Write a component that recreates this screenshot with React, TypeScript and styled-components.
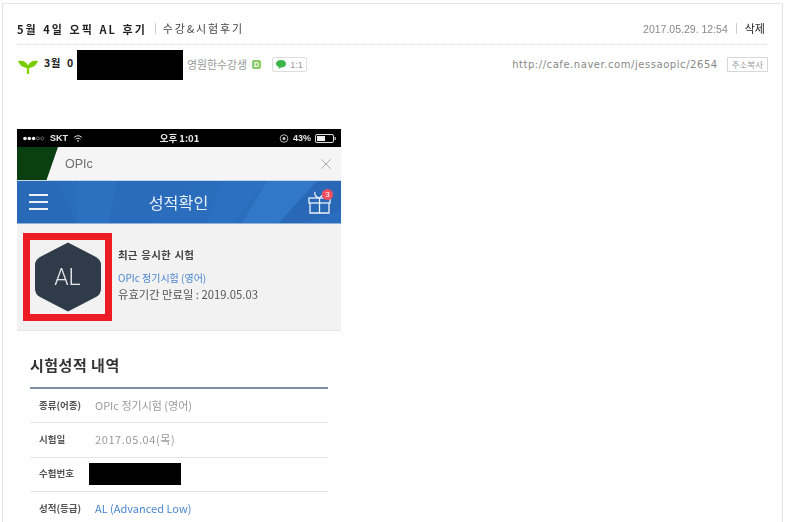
import React from "react";
import styled, { createGlobalStyle } from "styled-components";
import { X } from "lucide-react";

const KR = `"Noto Sans CJK KR", "Liberation Sans", sans-serif`;

const Global = createGlobalStyle`
  html, body { margin: 0; padding: 0; background: #fff; height: 522px; overflow: hidden; }
  body { font-family: ${KR}; }
`;

const Frame = styled.div`
  box-sizing: border-box;
  width: 781px;
  height: 530px;
  margin: 3px 0 0 2px;
  padding: 0 14px 0 14px;
  border: 1px solid #e6e6e6;
  border-bottom: 0;
  overflow: hidden;
`;

const TitleRow = styled.div`
  height: 41px;
  display: flex;
  align-items: center;
  padding-top: 9px;
  box-sizing: border-box;
  border-bottom: 1px dotted #dcdcdc;
  filter: blur(0.3px);
`;

const Subject = styled.strong`
  font-size: 11px;
  font-weight: 700;
  color: #222;
  letter-spacing: 2.05px;
  word-spacing: 1px;
`;

const Category = styled.span`
  font-size: 11px;
  color: #444;
  margin-left: 8px;
  padding-left: 7px;
  letter-spacing: 1.85px;
  border-left: 1px solid #ccc;
  line-height: 11px;
`;

const Meta = styled.div`
  margin-left: auto;
  display: flex;
  align-items: center;
  font-family: "Liberation Sans", sans-serif;
  font-size: 10.5px;
  color: #888;
`;

const Delete = styled.span`
  font-family: ${KR};
  font-size: 11px;
  color: #222;
  margin-left: 8px;
  padding-left: 8px;
  margin-right: 3px;
  border-left: 1px solid #ccc;
  line-height: 11px;
`;

const AuthorRow = styled.div`
  height: 84px;
  display: flex;
  align-items: flex-start;
`;

const Sprout = styled.svg`
  width: 20px;
  height: 20px;
  margin: 11px 6px 0 1px;
  flex: none;
`;

const Nick = styled.strong`
  font-size: 10.5px;
  color: #222;
  margin-top: 10px;
  line-height: 16px;
  letter-spacing: 0.6px;
  word-spacing: 3px;
  width: 33px;
  flex: none;
  white-space: pre;
`;

const Redact = styled.div<{ $w: number; $h: number }>`
  width: ${(p) => p.$w}px;
  height: ${(p) => p.$h}px;
  background: #000;
  flex: none;
`;

const NickRedact = styled(Redact)`
  margin-top: 5px;
`;

const NumberRedact = styled(Redact)`
  margin: 1px 0 0 -6px;
`;

const Rank = styled.span`
  font-size: 10.9px;
  color: #999;
  margin: 11px 0 0 4px;
  line-height: 16px;
`;

const RankBadge = styled.span`
  width: 9px;
  height: 9px;
  margin: 15px 0 0 5px;
  border-radius: 2px;
  background: #8bc964;
  color: #fff;
  font-size: 7px;
  line-height: 9px;
  text-align: center;
  font-family: "Liberation Sans", sans-serif;
  font-weight: 700;
`;

const ChatButton = styled.span`
  display: flex;
  align-items: center;
  gap: 4px;
  box-sizing: border-box;
  height: 15px;
  margin: 12px 0 0 11px;
  padding: 0 3px 0 3px;
  border: 1px solid #dedede;
  border-radius: 2px;
  font-family: "Liberation Sans", sans-serif;
  font-size: 9px;
  color: #999;
`;

const Bubble = styled.svg`
  width: 10px;
  height: 9px;
`;

const UrlBox = styled.div`
  margin: 11px 0 0 auto;
  display: flex;
  align-items: center;
  height: 16px;
`;

const Url = styled.span`
  font-family: "DejaVu Sans", sans-serif;
  font-size: 10px;
  color: #888;
  letter-spacing: 0.55px;
  font-weight: 400;
`;

const CopyButton = styled.span`
  box-sizing: border-box;
  height: 15px;
  margin: 0 0 0 9px;
  padding: 0 4px;
  border: 1px solid #d8d8d8;
  font-size: 8.5px;
  line-height: 13px;
  color: #999;
`;

const Shot = styled.div`
  width: 324px;
  filter: blur(0.45px);
`;

const StatusBar = styled.div`
  height: 18px;
  background: #000;
  color: #e8e8e8;
  font-family: "Liberation Sans", sans-serif;
  font-size: 9px;
  font-weight: 700;
  display: grid;
  grid-template-columns: 1fr auto 1fr;
  align-items: center;
  padding: 0 5px 0 6px;
`;

const StatusLeft = styled.div`
  display: flex;
  align-items: center;
  gap: 5px;
`;

const StatusRight = styled(StatusLeft)`
  justify-content: flex-end;
  gap: 4px;
`;

const Clock = styled.span`
  font-family: ${KR};
  font-size: 9.5px;
`;

const StatusIcon = styled.svg<{ $w: number }>`
  width: ${(p) => p.$w}px;
  height: 9px;
`;

const BrowserBar = styled.div`
  height: 34px;
  background: #f5f5f5;
  border-bottom: 1px solid #c9d6e6;
  box-sizing: border-box;
  display: flex;
  align-items: center;
  font-family: "Liberation Sans", sans-serif;
  font-size: 12.5px;
  color: #6d6d6d;
  padding-right: 6px;
`;

const Wedge = styled.div`
  width: 41px;
  height: 100%;
  background: #0a3f12;
  clip-path: polygon(0 0, 100% 0, 72% 100%, 0 100%);
  margin-right: 7px;
  flex: none;
`;

const CloseIcon = styled(X)`
  margin-left: auto;
  color: #a9a9a9;
`;

const AppBar = styled.div`
  position: relative;
  height: 43px;
  background: #2a6dbd;
  display: flex;
  align-items: center;
  justify-content: space-between;
  padding: 0 8px 0 12px;
  color: #e6eef8;
  border-bottom: 1px solid #8fb0d8;
  box-sizing: border-box;
`;

const Facets = styled.svg`
  position: absolute;
  inset: 0;
  width: 100%;
  height: 100%;
`;

const Burger = styled.div`
  position: relative;
  display: flex;
  flex-direction: column;
  gap: 5px;
  width: 19px;
`;

const BurgerLine = styled.span`
  display: block;
  height: 2px;
  background: #eaf1fa;
`;

const AppTitle = styled.span`
  position: relative;
  font-size: 16.2px;
  margin-left: 3px;
`;

const Gift = styled.div`
  position: relative;
  width: 27px;
  height: 28px;
`;

const Badge = styled.span`
  position: absolute;
  top: 1px;
  right: 0;
  width: 11px;
  height: 11px;
  border-radius: 50%;
  background: #ef4f5f;
  color: #fff;
  font-family: "Liberation Sans", sans-serif;
  font-size: 8px;
  line-height: 11px;
  text-align: center;
`;

const Profile = styled.div`
  height: 107px;
  background: #f2f2f2;
  border-bottom: 1px solid #e6e6e6;
  box-sizing: border-box;
  display: flex;
  align-items: flex-start;
  padding: 9px 0 0 6px;
`;

const Highlight = styled.div`
  box-sizing: border-box;
  width: 89px;
  height: 88px;
  border: 7.5px solid #ed1c24;
  display: flex;
  align-items: center;
  justify-content: center;
  flex: none;
`;

const Hexagon = styled.div`
  position: relative;
  width: 68px;
  height: 72px;
  display: flex;
  align-items: center;
  justify-content: center;
`;

const HexShape = styled.svg`
  position: absolute;
  inset: 0;
  width: 100%;
  height: 100%;
`;

const Grade = styled.span`
  position: relative;
  font-family: Roboto, "Liberation Sans", sans-serif;
  font-weight: 300;
  font-size: 23px;
  color: #e4e6e8;
`;

const ProfileText = styled.div`
  display: flex;
  flex-direction: column;
  margin: 14px 0 0 6px;
`;

const ProfileTitle = styled.strong`
  font-size: 10.5px;
  line-height: 16px;
  color: #444;
  word-spacing: 1px;
  letter-spacing: 0.2px;
  margin-bottom: 7px;
`;

const ExamLink = styled.span`
  font-size: 10px;
  line-height: 15px;
  color: #4a86cf;
`;

const Valid = styled.span`
  font-size: 11.3px;
  line-height: 18px;
  color: #555;
`;

const Results = styled.div`
  background: #fff;
  padding: 20px 13px 0;
`;

const ResultsTitle = styled.h2`
  margin: 0;
  font-size: 15px;
  font-weight: 700;
  line-height: 28px;
  color: #333;
  height: 36px;
  letter-spacing: 0.5px;
`;

const Table = styled.div`
  border-top: 2px solid #7f8da0;
`;

const Row = styled.div`
  height: 34.3px;
  box-sizing: border-box;
  padding-bottom: 2px;
  display: flex;
  align-items: center;
  border-bottom: 1px solid #e4e4e4;
`;

const RowLabel = styled.span`
  width: 65px;
  box-sizing: border-box;
  padding-left: 9px;
  flex: none;
  font-size: 9.5px;
  font-weight: 700;
  color: #555;
`;

const RowValue = styled.span<{ $link?: boolean; $spaced?: boolean }>`
  font-size: 11px;
  letter-spacing: ${(p) => (p.$spaced ? "0.6px" : "0")};
  color: ${(p) => (p.$link ? "#4a86cf" : "#999")};
`;

const facets = [
  { points: "0,0 38,0 60,43 0,43", fill: "#296ab8" },
  { points: "60,0 100,0 92,43 60,43", fill: "#2c70c0" },
  { points: "100,0 180,0 130,43 92,43", fill: "#2a6cbb" },
  { points: "205,0 250,0 215,43 190,43", fill: "#2c71c1" },
  { points: "250,0 300,0 262,43 225,43", fill: "#3178c8" },
  { points: "300,0 324,0 324,30 285,43 262,43", fill: "#2868b6" },
];

export default function App() {
  return (
    <>
      <Global />
      <Frame>
        <TitleRow>
          <Subject>5월 4일 오픽 AL 후기</Subject>
          <Category>수강&시험후기</Category>
          <Meta>
            2017.05.29. 12:54
            <Delete>삭제</Delete>
          </Meta>
        </TitleRow>
        <AuthorRow>
          <Sprout viewBox="0 0 20 20">
            <path d="M10 18V10" stroke="#86d400" strokeWidth="2.4" />
            <path d="M10 12C6 12 2 10 0 5C5 4 9 6 10 10C11 6 15 4 20 5C18 10 14 12 10 12Z" fill="#78cc00" />
          </Sprout>
          <Nick>3월 0</Nick>
          <NickRedact $w={106} $h={30} />
          <Rank>영원한수강생</Rank>
          <RankBadge>D</RankBadge>
          <ChatButton>
            <Bubble viewBox="0 0 10 9">
              <path d="M5 0C8 0 10 1.5 10 3.7C10 6 8 7.4 5 7.4L2.5 9L3 7C1 6.5 0 5.300 0 3.700C0 1.500 2 0 5 0Z" fill="#3cb54a" />
            </Bubble>
            1:1
          </ChatButton>
          <UrlBox>
            <Url>http://cafe.naver.com/jessaopic/2654</Url>
            <CopyButton>주소복사</CopyButton>
          </UrlBox>
        </AuthorRow>
        <Shot>
          <StatusBar>
            <StatusLeft>
              <StatusIcon $w={22} viewBox="0 0 22 9">
                <circle cx="2" cy="4.500" r="1.800" fill="#eee" />
                <circle cx="6.300" cy="4.500" r="1.800" fill="#eee" />
                <circle cx="10.600" cy="4.500" r="1.800" fill="#eee" />
                <circle cx="15" cy="4.500" r="1.500" fill="none" stroke="#aaa" strokeWidth="0.600" />
                <circle cx="19.300" cy="4.500" r="1.500" fill="none" stroke="#aaa" strokeWidth="0.600" />
              </StatusIcon>
              <span>SKT</span>
              <StatusIcon $w={10} viewBox="0 0 10 9">
                <path d="M1 3.500C3.500 1.200 6.500 1.200 9 3.500M2.500 5.200C4 3.900 6 3.900 7.500 5.200" stroke="#ddd" strokeWidth="1" fill="none" />
                <path d="M5 8L3.800 6.500C4.500 6 5.500 6 6.200 6.500Z" fill="#ddd" />
              </StatusIcon>
            </StatusLeft>
            <Clock>오후 1:01</Clock>
            <StatusRight>
              <StatusIcon $w={10} viewBox="0 0 10 9">
                <circle cx="5" cy="4.500" r="3.800" fill="none" stroke="#ccc" strokeWidth="0.900" />
                <circle cx="5" cy="4.500" r="1.500" fill="#ccc" />
              </StatusIcon>
              <span>43%</span>
              <StatusIcon $w={21} viewBox="0 0 21 9">
                <rect x="0.500" y="0.500" width="18" height="8" rx="1.500" fill="none" stroke="#ddd" />
                <rect x="2" y="2" width="8" height="5" fill="#eee" />
                <rect x="19.500" y="3" width="1.200" height="3" fill="#ddd" />
              </StatusIcon>
            </StatusRight>
          </StatusBar>
          <BrowserBar>
            <Wedge />
            OPIc
            <CloseIcon size={18} strokeWidth={1.3} />
          </BrowserBar>
          <AppBar>
            <Facets viewBox="0 0 324 43" preserveAspectRatio="none">
              {facets.map((f) => (
                <polygon key={f.points} points={f.points} fill={f.fill} />
              ))}
            </Facets>
            <Burger>
              <BurgerLine />
              <BurgerLine />
              <BurgerLine />
            </Burger>
            <AppTitle>성적확인</AppTitle>
            <Gift>
              <svg width="27" height="28" viewBox="0 0 27 28" fill="none" stroke="#eaf1fa" strokeWidth="1.300">
                <rect x="3" y="10" width="21" height="5" />
                <path d="M4 15V25H23V15M13.500 10V25M13.500 10C10 9 8 7 9 4M13.500 10C16 8 18 6 17 4" />
              </svg>
              <Badge>3</Badge>
            </Gift>
          </AppBar>
          <Profile>
            <Highlight>
              <Hexagon>
                <HexShape viewBox="0 0 68 72">
                  <path
                    d="M34 1.500L62 16Q67 19 67 24V48Q67 53 62 56L34 70.500L6 56Q1 53 1 48V24Q1 19 6 16Z"
                    fill="#2f3b49"
                  />
                </HexShape>
                <Grade>AL</Grade>
              </Hexagon>
            </Highlight>
            <ProfileText>
              <ProfileTitle>최근 응시한 시험</ProfileTitle>
              <ExamLink>OPIc 정기시험 (영어)</ExamLink>
              <Valid>유효기간 만료일 : 2019.05.03</Valid>
            </ProfileText>
          </Profile>
          <Results>
            <ResultsTitle>시험성적 내역</ResultsTitle>
            <Table>
              <Row>
                <RowLabel>종류(어종)</RowLabel>
                <RowValue>OPIc 정기시험 (영어)</RowValue>
              </Row>
              <Row>
                <RowLabel>시험일</RowLabel>
                <RowValue $spaced>2017.05.04(목)</RowValue>
              </Row>
              <Row>
                <RowLabel>수험번호</RowLabel>
                <NumberRedact $w={92} $h={22} />
              </Row>
              <Row>
                <RowLabel>성적(등급)</RowLabel>
                <RowValue $link>AL (Advanced Low)</RowValue>
              </Row>
            </Table>
          </Results>
        </Shot>
      </Frame>
    </>
  );
}
